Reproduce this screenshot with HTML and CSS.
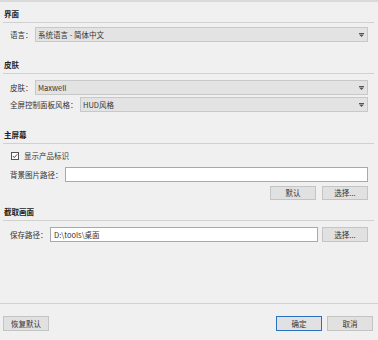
FILE: index.html
```html
<!DOCTYPE html>
<html lang="zh-CN">
<head>
<meta charset="utf-8">
<title>设置</title>
<link rel="stylesheet" href="styles.css">
</head>
<body>
<div class="top-bar"></div>
<main class="settings">
  <section class="group g1">
    <h2 class="group-title">界面</h2>
    <div class="rows">
      <div class="row">
        <span class="label">语言：</span>
        <div class="combo"><span>系统语言 - 简体中文</span>
          <svg class="arrow" width="5" height="4" viewBox="0 0 5 4"><rect x="0" y="0" width="5" height="1"/><polygon points="0,1.5 5,1.5 2.5,4"/></svg>
        </div>
      </div>
    </div>
  </section>
  <section class="group g2">
    <h2 class="group-title">皮肤</h2>
    <div class="rows">
      <div class="row">
        <span class="label">皮肤：</span>
        <div class="combo"><span>Maxwell</span>
          <svg class="arrow" width="5" height="4" viewBox="0 0 5 4"><rect x="0" y="0" width="5" height="1"/><polygon points="0,1.5 5,1.5 2.5,4"/></svg>
        </div>
      </div>
      <div class="row">
        <span class="label">全屏控制面板风格：</span>
        <div class="combo"><span>HUD风格</span>
          <svg class="arrow" width="5" height="4" viewBox="0 0 5 4"><rect x="0" y="0" width="5" height="1"/><polygon points="0,1.5 5,1.5 2.5,4"/></svg>
        </div>
      </div>
    </div>
  </section>
  <section class="group g3">
    <h2 class="group-title">主屏幕</h2>
    <div class="rows">
      <label class="row check-row">
        <svg class="checkbox" width="8" height="8" viewBox="0 0 8 8"><rect x="0.5" y="0.5" width="7" height="7" fill="#fff" stroke="#555"/><path d="M1.8 4 L3.3 5.6 L6.2 2.3" fill="none" stroke="#333" stroke-width="0.9"/></svg>
        <span>显示产品标识</span>
      </label>
      <div class="row">
        <span class="label">背景图片路径：</span>
        <div class="field"></div>
      </div>
      <div class="row btn-row short">
        <button class="btn">默认</button>
        <button class="btn">选择...</button>
      </div>
    </div>
  </section>
  <section class="group g4">
    <h2 class="group-title">截取画面</h2>
    <div class="rows">
      <div class="row">
        <span class="label">保存路径：</span>
        <div class="field"><span>D:\tools\桌面</span></div>
        <button class="btn path-btn">选择...</button>
      </div>
    </div>
  </section>
</main>
<footer class="footer">
  <button class="btn">恢复默认</button>
  <div class="footer-actions">
    <button class="btn btn-primary">确定</button>
    <button class="btn">取消</button>
  </div>
</footer>
</body>
</html>
```
FILE: styles.css
```css
* { box-sizing: border-box; }

body {
  margin: 0;
  width: 378px;
  height: 340px;
  background: #f0f0f0;
  font-family: "Noto Sans CJK SC", "Noto Sans", sans-serif;
  font-size: 7.5px;
  line-height: 12px;
  color: #333;
  display: flex;
  flex-direction: column;
  overflow: hidden;
}

.top-bar {
  height: 2px;
  flex: none;
  background: #dadada;
}

.settings {
  flex: 1;
  padding: 0 4px 0 3px;
}

.group-title {
  margin: 0;
  padding: 6px 0 2px 1px;
  font-size: 7.5px;
  line-height: 12px;
  font-weight: bold;
  color: #222;
  border-bottom: 1px solid #d0d0d0;
}

.g2 { margin-top: 11px; }
.g3 { margin-top: 11px; }
.g4 { margin-top: 0; }

.rows {
  display: flex;
  flex-direction: column;
  padding: 0 6px 0 7px;
}

.g1 .rows { padding-top: 4px; }
.g2 .rows { padding-top: 6px; gap: 2px; }
.g3 .rows { padding-top: 4px; gap: 4px; }
.g4 .rows { padding-top: 6px; }

.row {
  display: flex;
  align-items: center;
  height: 15px;
  gap: 2.5px;
}

.row.short { height: 14px; }

.label {
  white-space: nowrap;
  color: #333;
}

.combo {
  flex: 1;
  height: 15px;
  display: flex;
  align-items: center;
  justify-content: space-between;
  padding: 0 3px 0 2px;
  border: 1px solid #c8c8c8;
  background: #e3e3e3;
  color: #333;
}

.arrow { fill: #555; }

.field {
  flex: 1;
  height: 15px;
  display: flex;
  align-items: center;
  padding: 0 3px;
  border: 1px solid #a9a9a9;
  background: #fff;
  color: #333;
}

.check-row {
  gap: 5px;
  padding-left: 2px;
  margin-left: -1px;
}

.btn {
  width: 46px;
  height: 15px;
  padding: 0;
  border: 1px solid #c4c4c4;
  background: #e1e1e1;
  font-family: inherit;
  font-size: 7.5px;
  line-height: 12px;
  color: #333;
}

.btn-row {
  justify-content: flex-end;
  gap: 6px;
}

.btn-row .btn { height: 14px; }

.path-btn { margin-left: 2px; }

.btn-primary {
  border-color: #2a70c0;
}

.footer {
  flex: none;
  height: 37px;
  border-top: 1px solid #d2d2d2;
  display: flex;
  align-items: flex-start;
  justify-content: space-between;
  padding: 12px 5px 0 3px;
}

.footer-actions {
  display: flex;
  gap: 5px;
}
```
